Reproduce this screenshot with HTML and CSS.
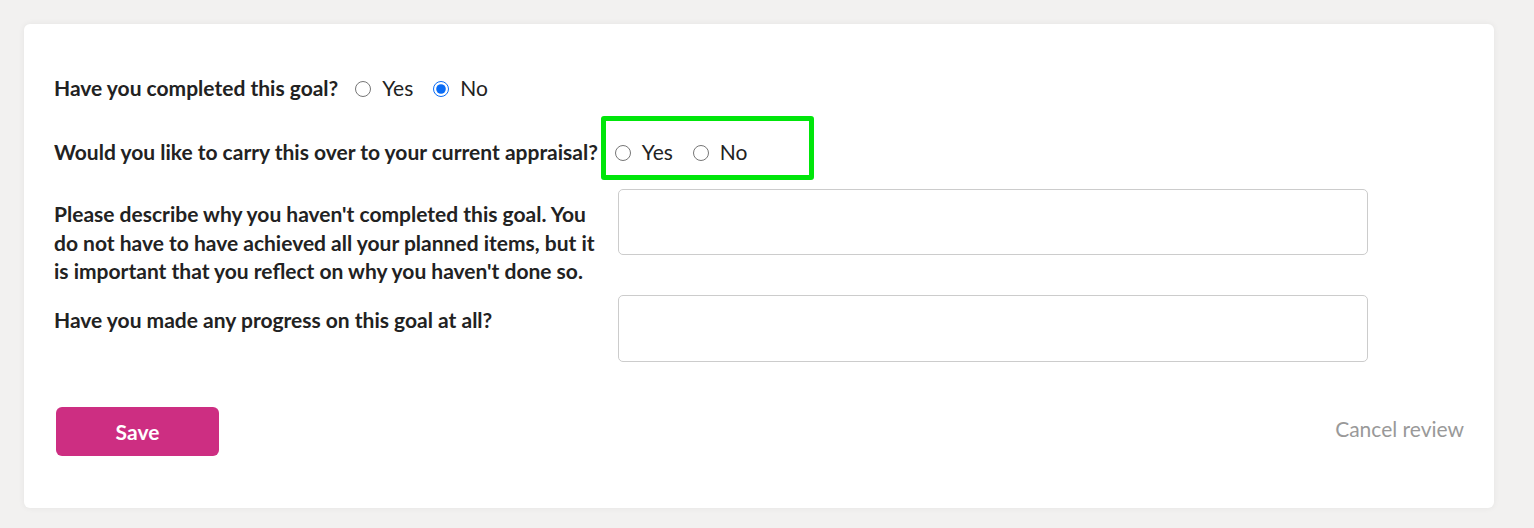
FILE: index.html
```html
<!DOCTYPE html>
<html lang="en">
<head>
<meta charset="utf-8">
<title>Goal review</title>
<link rel="stylesheet" href="styles.css">
</head>
<body>
<div class="card">
  <div class="row inline-row first">
    <span class="label">Have you completed this goal?</span>
    <span class="radios">
      <label class="opt"><input type="radio" name="completed" value="yes"><span>Yes</span></label>
      <label class="opt"><input type="radio" name="completed" value="no" checked><span>No</span></label>
    </span>
  </div>
  <div class="row inline-row second">
    <span class="label">Would you like to carry this over to your current appraisal?</span>
    <span class="radios highlighted">
      <label class="opt"><input type="radio" name="carry" value="yes"><span>Yes</span></label>
      <label class="opt"><input type="radio" name="carry" value="no"><span>No</span></label>
    </span>
  </div>
  <div class="row grid-row third">
    <label class="label block" for="why">Please describe why you haven't completed this goal. You do not have to have achieved all your planned items, but it is important that you reflect on why you haven't done so.</label>
    <textarea id="why" class="field"></textarea>
  </div>
  <div class="row grid-row fourth">
    <label class="label block" for="progress">Have you made any progress on this goal at all?</label>
    <textarea id="progress" class="field tall"></textarea>
  </div>
  <div class="actions">
    <button class="save" type="button">Save</button>
    <a class="cancel" href="#">Cancel review</a>
  </div>
</div>
</body>
</html>
```

FILE: styles.css
```css
html, body {
  margin: 0;
  padding: 0;
  background: #f2f1f0;
}
body {
  padding: 24px 40px 20px 24px;
  font-family: Lato, "Open Sans", "Liberation Sans", sans-serif;
  color: #222;
}
.card {
  width: 1470px;
  box-sizing: border-box;
  height: 484px;
  background: #fff;
  border-radius: 6px;
  box-shadow: 0 0 6px rgba(0,0,0,0.06);
  padding: 50px 30px 0 30px;
}
.label {
  font-size: 21px;
  font-weight: 700;
  line-height: 28.5px;
  color: #222;
}
.inline-row {
  display: flex;
  align-items: center;
  height: 29px;
}
.second {
  margin-top: 35px;
}
.radios {
  display: inline-flex;
  align-items: center;
  margin-left: 17px;
  position: relative;
}
.opt {
  display: inline-flex;
  align-items: center;
  font-size: 21px;
  line-height: 28.5px;
  color: #222;
  margin-right: 20px;
}
.opt input {
  margin: 0 11px 0 0;
  width: 16px;
  height: 16px;
  accent-color: #0a6cf5;
}
.highlighted::after {
  content: "";
  position: absolute;
  box-sizing: border-box;
  left: -14px;
  top: -22px;
  width: 213px;
  height: 64px;
  border: 5px solid #00e60a;
  border-radius: 3px;
}
.grid-row {
  display: grid;
  grid-template-columns: 564px 750px;
  align-items: start;
}
.third {
  margin-top: 22px;
}
.fourth {
  margin-top: 9px;
}
.block {
  display: block;
  padding-top: 11px;
  padding-right: 15px;
}
.field {
  display: block;
  box-sizing: border-box;
  width: 750px;
  height: 66px;
  border: 1px solid #cccccc;
  border-radius: 5px;
  resize: none;
  font-family: inherit;
  font-size: 16px;
  padding: 8px 10px;
  margin: 0;
  outline: none;
}
.tall {
  height: 67px;
}
.actions {
  display: flex;
  justify-content: space-between;
  align-items: center;
  margin-top: 45px;
}
.save {
  margin-left: 2px;
  width: 163px;
  height: 49px;
  border: none;
  border-radius: 6px;
  background: #cd2e82;
  color: #fff;
  font-family: inherit;
  font-size: 21px;
  font-weight: 700;
  cursor: pointer;
}
.cancel {
  font-size: 21px;
  color: #999;
  text-decoration: none;
  margin-top: -6px;
}
```
